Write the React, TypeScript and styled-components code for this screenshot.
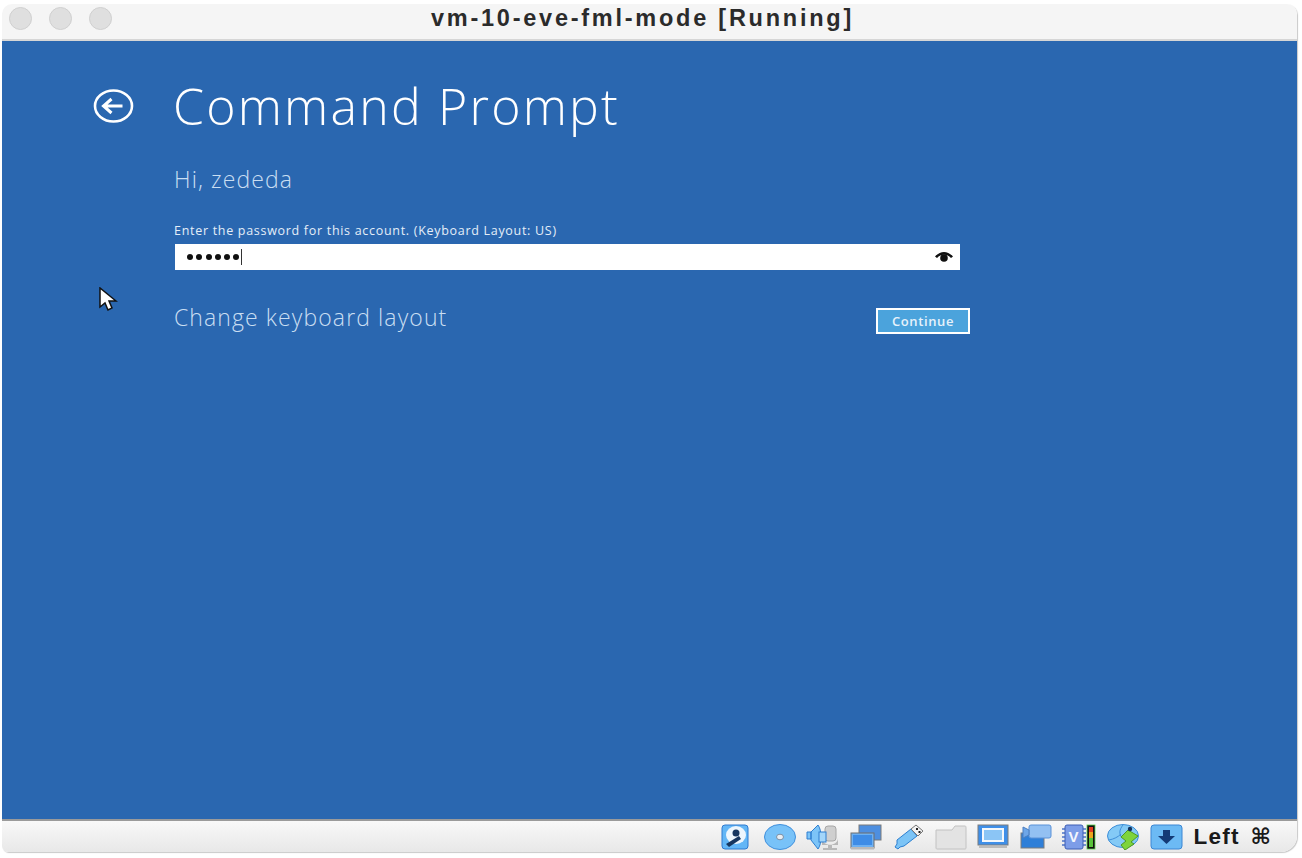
import React from 'react';
import styled, { createGlobalStyle } from 'styled-components';

const GlobalStyle = createGlobalStyle`
  html, body {
    margin: 0;
    padding: 0;
    background: #ffffff;
  }
  body {
    font-family: "Open Sans", "Liberation Sans", sans-serif;
  }
`;

const Page = styled.div`
  width: 1302px;
  height: 858px;
  box-sizing: border-box;
  padding: 4px 5px 6px 2px;
  overflow: hidden;
`;

const Window = styled.div`
  height: 100%;
  display: flex;
  flex-direction: column;
  border-radius: 10px 10px 16px 6px;
  overflow: hidden;
  box-shadow: 1px 1px 1px #c9c9c9;
`;

const TitleBar = styled.header`
  flex: 0 0 37px;
  box-sizing: border-box;
  position: relative;
  display: flex;
  align-items: center;
  justify-content: center;
  padding-right: 14px;
  background: #f5f5f5;
  border-bottom: 2px solid #d6d6d6;
`;

const Lights = styled.div`
  position: absolute;
  left: 7px;
  top: 3px;
  display: flex;
  gap: 17px;
`;

const Light = styled.span`
  width: 23px;
  height: 23px;
  box-sizing: border-box;
  border-radius: 50%;
  background: #dfdfdf;
  border: 1px solid #cfcfcf;
`;

const WindowTitle = styled.h1`
  margin: 0 0 6px;
  font-family: "Liberation Sans", Arial, sans-serif;
  font-size: 23.5px;
  font-weight: 700;
  color: #2b2b2b;
  letter-spacing: 2.75px;
`;

const Screen = styled.main`
  flex: 1;
  position: relative;
  background: #2a67b0;
  padding: 37px 0 0 91px;
`;

const HeadingRow = styled.div`
  display: flex;
  align-items: center;
  gap: 37px;
  height: 56px;
`;

const BackButton = styled.button`
  width: 43px;
  height: 34px;
  padding: 0;
  border: 0;
  background: none;
  display: flex;
`;

const Heading = styled.h2`
  margin: 0;
  font-size: 50px;
  font-weight: 300;
  color: #ffffff;
  line-height: 56px;
  letter-spacing: 2.2px;
`;

const Form = styled.form`
  margin: 30px 0 0 81px;
  width: 796px;
`;

const Greeting = styled.p`
  margin: 0;
  font-size: 23px;
  font-weight: 300;
  line-height: 30px;
  letter-spacing: 1.1px;
  color: #c9def2;
`;

const FieldLabel = styled.label`
  display: block;
  margin-top: 29px;
  font-size: 12.5px;
  line-height: 16px;
  letter-spacing: 0.7px;
  color: #e4eef8;
`;

const PasswordField = styled.div`
  margin: 5px 0 0 1px;
  width: 785px;
  height: 26px;
  box-sizing: border-box;
  padding: 0 7px 0 12px;
  display: flex;
  align-items: center;
  justify-content: space-between;
  background: #ffffff;
`;

const Dots = styled.span`
  display: flex;
  align-items: center;
  gap: 3.3px;
`;

const Dot = styled.i`
  width: 6px;
  height: 6px;
  border-radius: 50%;
  background: #101010;
`;

const Caret = styled.i`
  width: 1px;
  height: 16px;
  margin-left: -2px;
  background: #333333;
`;

const Actions = styled.div`
  margin-top: 33px;
  display: flex;
  align-items: center;
  justify-content: space-between;
`;

const LinkText = styled.a`
  font-size: 23px;
  font-weight: 300;
  line-height: 30px;
  letter-spacing: 1.1px;
  color: #c9def2;
  margin-top: -4px;
`;

const ContinueButton = styled.button`
  width: 94px;
  height: 26px;
  margin-top: 5px;
  padding: 0;
  border: 2px solid #ffffff;
  background: #4ba3dc;
  color: #e6f2fb;
  font-family: "Open Sans", sans-serif;
  font-size: 13px;
  font-weight: 600;
  letter-spacing: 0.6px;
`;

const Pointer = styled.svg`
  position: absolute;
  left: 96px;
  top: 246px;
`;

const StatusBar = styled.footer`
  flex: 0 0 33px;
  display: flex;
  align-items: center;
  justify-content: flex-end;
  gap: 10.5px;
  padding-right: 26px;
  background: linear-gradient(#f8f8f8, #e8e8e8);
  border-top: 2px solid #9a9a9a;
  box-sizing: border-box;
  svg:first-child {
    margin-right: 4px;
  }
`;

const HostKey = styled.span`
  display: flex;
  align-items: center;
  gap: 11px;
  font-family: "Liberation Sans", Arial, sans-serif;
  font-size: 22.5px;
  font-weight: 700;
  color: #1a1a1a;
  letter-spacing: 1.2px;
  white-space: nowrap;
`;

const CommandKey = styled.span`
  font-family: "DejaVu Sans", sans-serif;
  font-size: 22px;
  letter-spacing: 0;
`;

const Tray = styled.svg`
  flex: none;
`;

function BackIcon() {
  return (
    <svg width="43" height="34" viewBox="0 0 43 34" fill="none" stroke="#fff" strokeWidth="2.600">
      <ellipse cx="20.500" cy="17" rx="18.500" ry="15.500" />
      <path d="M29.500 17H10.500M18.500 10l-8 7 8 7" strokeWidth="3" />
    </svg>
  );
}

function EyeIcon() {
  return (
    <svg width="18" height="10" viewBox="0 0 18 10">
      <path d="M0 4.500C3 1.200 6 0 9 0s6 1.200 9 4.500L16 6C14 3.700 11.500 2.800 9 2.800S4 3.700 2 6z" fill="#111" />
      <circle cx="9" cy="6" r="3.800" fill="#111" />
    </svg>
  );
}

function DiskIcon() {
  return (
    <Tray width="28" height="26" viewBox="0 0 28 26">
      <rect x="1" y="1" width="26" height="24" rx="3" fill="#63b6f6" stroke="#2f7ad0" />
      <ellipse cx="15" cy="11" rx="10" ry="9" fill="#eef6fd" />
      <circle cx="15" cy="9" r="3.500" fill="#17365f" />
      <path d="M5 20l13-8 2 3-12 8z" fill="#17365f" />
    </Tray>
  );
}

function CdIcon() {
  return (
    <Tray width="32" height="26" viewBox="0 0 32 26">
      <ellipse cx="16" cy="13" rx="15.500" ry="12.500" fill="#78c2f8" stroke="#3f8fdc" />
      <ellipse cx="16" cy="13" rx="3.500" ry="2.800" fill="#e9eef3" stroke="#7c8fa5" />
    </Tray>
  );
}

function AudioIcon() {
  return (
    <Tray width="33" height="26" viewBox="0 0 33 26">
      <rect x="19" y="2" width="11" height="15" rx="3" fill="#cfcfcf" stroke="#a6a6a6" />
      <path d="M16 14c0 9 16 9 16 0v7H16zM22 21h4v3h5v2H17v-2h5z" fill="#b8b8b8" />
      <path d="M1 8h4V15H1zM5 8l7-7c4 5 4 19 0 24l-7-9z" fill="#7cc4f8" stroke="#2f7fd0" />
      <rect x="13" y="8" width="7" height="10" fill="#a3d6fa" stroke="#2f7fd0" />
    </Tray>
  );
}

function NetworkIcon() {
  return (
    <Tray width="32" height="26" viewBox="0 0 32 26">
      <rect x="9" y="1" width="22" height="15" fill="#4e8fe0" stroke="#7b7b7b" />
      <rect x="1" y="9" width="23" height="15" fill="#6db0f2" stroke="#6f6f6f" />
      <rect x="1" y="23" width="23" height="2.500" fill="#b9b9b9" />
      <rect x="3" y="11" width="19" height="10" fill="#3e8ce6" />
    </Tray>
  );
}

function UsbIcon() {
  return (
    <Tray width="32" height="26" viewBox="0 0 32 26">
      <path d="M5 16L19 5l6 7-13 10-4 1-2 2-3-2 2-3z" fill="#7cc4f6" stroke="#2c7fd0" />
      <path d="M19 5l5-4 7 6-5 5z" fill="#f2f2f2" stroke="#777" />
      <rect x="24" y="4" width="2" height="2" fill="#222" />
      <rect x="26.500" y="7" width="2" height="2" fill="#222" />
    </Tray>
  );
}

function FolderIcon() {
  return (
    <Tray width="32" height="26" viewBox="0 0 32 26">
      <path d="M1 6h16l3-4h10c1 0 1 1 1 2v20c0 1-1 1-1 1H2c-1 0-1-1-1-1z" fill="#e3e3e3" stroke="#c2c2c2" />
    </Tray>
  );
}

function DisplayIcon() {
  return (
    <Tray width="32" height="26" viewBox="0 0 32 26">
      <rect x="1" y="1" width="30" height="20" fill="#3f8fe8" stroke="#7d7d7d" />
      <rect x="6" y="5" width="20" height="12" fill="#8bc5f5" stroke="#f4f8fc" strokeWidth="2" />
      <path d="M2 22h28v2H2z" fill="#bcbcbc" />
    </Tray>
  );
}

function CaptureIcon() {
  return (
    <Tray width="32" height="26" viewBox="0 0 32 26">
      <rect x="1" y="9" width="23" height="15" fill="#2f7fd8" stroke="#7d7d7d" />
      <rect x="9" y="1" width="22" height="13" rx="2" fill="#93c0f2" stroke="#5a92d8" />
      <path d="M3 3l6 3v5l-6 3z" fill="#6ea6e8" stroke="#4c7fc0" />
    </Tray>
  );
}

function ChipIcon() {
  return (
    <Tray width="34" height="26" viewBox="0 0 34 26">
      <path d="M0 5h3M0 9h3M0 13h3M0 17h3M0 21h3M21 5h3M21 9h3M21 13h3M21 17h3M21 21h3" stroke="#4c74c8" strokeWidth="1.500" />
      <rect x="3" y="1" width="18" height="24" rx="2" fill="#7d9de8" stroke="#3f5fb4" />
      <text x="6.500" y="18" fontFamily="Liberation Sans, sans-serif" fontSize="15" fontWeight="700" fill="#f4f7fd">V</text>
      <rect x="25" y="1" width="8" height="24" fill="#111" stroke="#58d04a" strokeWidth="0.800" />
      <rect x="27" y="3" width="4" height="5" fill="#e33c20" />
      <rect x="27" y="8" width="4" height="6" fill="#eda51c" />
      <rect x="27" y="14" width="4" height="9" fill="#58c43a" />
    </Tray>
  );
}

function SharedIcon() {
  return (
    <Tray width="33" height="26" viewBox="0 0 33 26">
      <ellipse cx="16" cy="12" rx="15.500" ry="11.500" fill="#84caf6" stroke="#3f8fd8" />
      <path d="M16 1c-4 5-4 9-1 13M2 16c5-1 9-3 12-6" stroke="#3f8fd8" fill="none" />
      <path d="M14 13l7-7 10 6-7 6 3 2-9 6-4-5 5-4z" fill="#7ed43c" stroke="#4e9a24" />
      <circle cx="23" cy="5" r="2.200" fill="#15335c" />
    </Tray>
  );
}

function DownloadIcon() {
  return (
    <Tray width="33" height="26" viewBox="0 0 33 26">
      <rect x="1" y="1" width="31" height="24" rx="3" fill="#6cbaf4" stroke="#3a86d4" />
      <path d="M13 6h7v6h5l-8.500 8L8 12h5z" fill="#143a76" />
    </Tray>
  );
}

function App() {
  return (
    <>
      <GlobalStyle />
      <Page>
        <Window>
          <TitleBar>
            <Lights>
              <Light />
              <Light />
              <Light />
            </Lights>
            <WindowTitle>vm-10-eve-fml-mode [Running]</WindowTitle>
          </TitleBar>
          <Screen>
            <HeadingRow>
              <BackButton type="button" aria-label="Back">
                <BackIcon />
              </BackButton>
              <Heading>Command Prompt</Heading>
            </HeadingRow>
            <Form>
              <Greeting>Hi, zededa</Greeting>
              <FieldLabel>Enter the password for this account. (Keyboard Layout: US)</FieldLabel>
              <PasswordField>
                <Dots>
                  {[0, 1, 2, 3, 4, 5].map((n) => (
                    <Dot key={n} />
                  ))}
                  <Caret />
                </Dots>
                <EyeIcon />
              </PasswordField>
              <Actions>
                <LinkText>Change keyboard layout</LinkText>
                <ContinueButton type="button">Continue</ContinueButton>
              </Actions>
            </Form>
            <Pointer width="20" height="26" viewBox="0 0 20 26">
              <path d="M2 1v19l5-4 3 7 4-2-3-7h7z" fill="#fff" stroke="#111" strokeWidth="1.500" />
            </Pointer>
          </Screen>
          <StatusBar>
            <DiskIcon />
            <CdIcon />
            <AudioIcon />
            <NetworkIcon />
            <UsbIcon />
            <FolderIcon />
            <DisplayIcon />
            <CaptureIcon />
            <ChipIcon />
            <SharedIcon />
            <DownloadIcon />
            <HostKey>
              Left
              <CommandKey>⌘</CommandKey>
            </HostKey>
          </StatusBar>
        </Window>
      </Page>
    </>
  );
}

export default App;
